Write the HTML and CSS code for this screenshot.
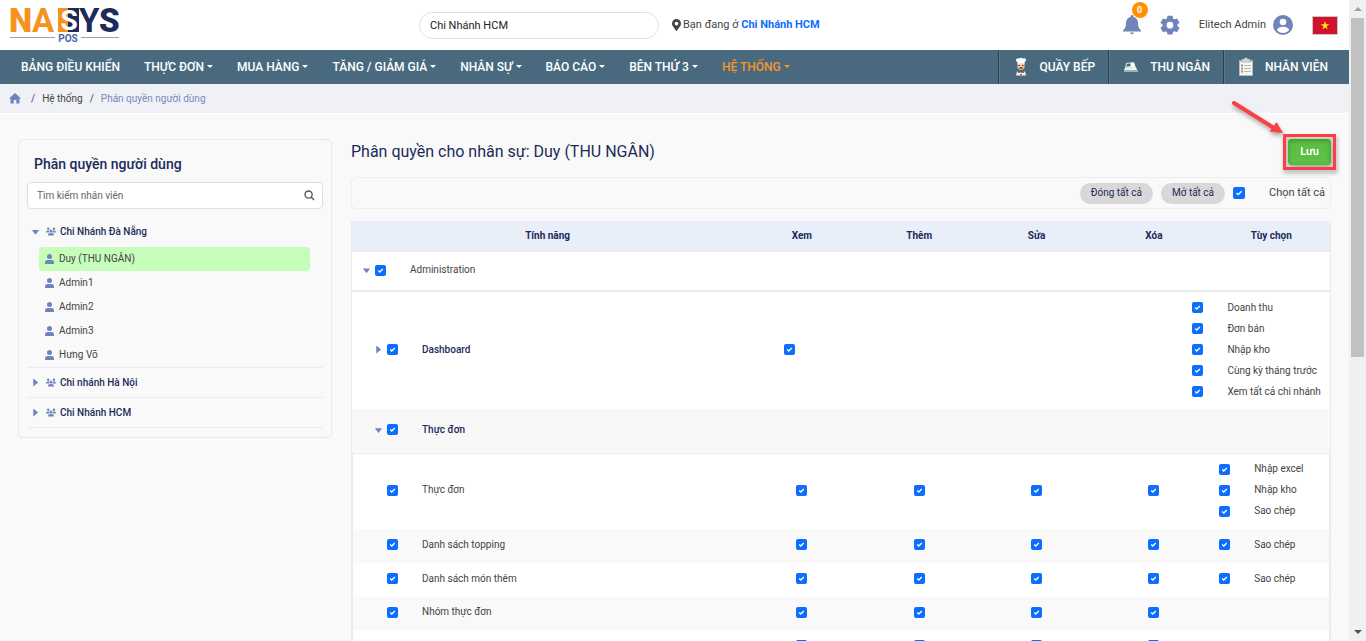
FILE: index.html
```html
<!DOCTYPE html>
<html lang="vi">
<head>
<meta charset="utf-8">
<title>Phân quyền người dùng</title>
<link rel="stylesheet" href="styles.css">
</head>
<body>
<svg class="defs" width="0" height="0" aria-hidden="true">
  <symbol id="user" viewBox="0 0 9 10"><circle cx="4.5" cy="2.6" r="2.5"/><path d="M0 10V8.5C0 6.8 1.3 6 2.6 6h3.8C7.700 6 9 6.800 9 8.500V10z"/></symbol>
  <symbol id="users" viewBox="0 0 640 512"><path d="M144 0a80 80 0 1 1 0 160A80 80 0 1 1 144 0zM512 0a80 80 0 1 1 0 160A80 80 0 1 1 512 0zM0 298.700C0 239.800 47.800 192 106.700 192h42.700c15.900 0 31 3.500 44.600 9.700-1.300 7.200-1.900 14.700-1.900 22.300 0 38.200 16.800 72.500 43.300 96H21.300C9.600 320 0 310.400 0 298.700zM405.300 320h-.7c26.600-23.500 43.300-57.800 43.300-96 0-7.600-.7-15-1.900-22.300 13.600-6.300 28.700-9.700 44.600-9.700h42.700C592.200 192 640 239.800 640 298.700c0 11.800-9.600 21.300-21.300 21.300zM224 224a96 96 0 1 1 192 0 96 96 0 1 1-192 0zM128 485.300C128 411.700 187.700 352 261.300 352h117.400C452.300 352 512 411.700 512 485.300c0 14.700-11.900 26.700-26.700 26.700H154.700c-14.700 0-26.700-11.900-26.700-26.700z"/></symbol>
</svg>
<div class="shell">
<div class="app">
  <header class="topbar">
    <a class="logo" href="#" aria-label="NASYS POS">
      <svg width="112" height="42" viewBox="0 0 112 42">
        <rect x="49" y="5" width="10" height="24" fill="#f6921e"/><rect x="59" y="5" width="11" height="24" fill="#1c2b59"/>
        <g font-family="Roboto, sans-serif" font-weight="900" font-size="33">
          <text x="0" y="29" fill="#f6921e">N</text><text x="23" y="29" fill="#f6921e" font-weight="700">A</text>
          <text x="60" y="27" fill="#fff" font-size="28" font-weight="700" text-anchor="middle">S</text>
          <text x="70" y="29" fill="#1c2b59" font-weight="700">Y</text><text x="90" y="29" fill="#1c2b59">S</text>
        </g>
        <path d="M1 34.500h45M72 34.500h38" stroke="#9aa0b5"/>
        <text x="59" y="39" text-anchor="middle" font-family="Roboto, sans-serif" font-weight="700" font-size="10" fill="#4a66a5">POS</text>
      </svg>
    </a>
    <div class="branch">
      <input class="branch-input" type="text" value="Chi Nhánh HCM" aria-label="Chi nhánh">
      <p class="here"><svg width="9" height="12" viewBox="0 0 384 512" fill="#444"><path fill-rule="evenodd" d="M172 502C27 291 0 270 0 192 0 86 86 0 192 0s192 86 192 192c0 78-27 99-172 310-10 13-30 13-40 0zM192 272a80 80 0 1 0 0-160 80 80 0 0 0 0 160z"/></svg>
      <span>Bạn đang ở <a href="#">Chi Nhánh HCM</a></span></p>
    </div>
    <div class="tools">
      <button class="icon-btn bell" aria-label="Thông báo"><svg width="18" height="20" viewBox="0 0 18 20" fill="#6f84bb"><path d="M9 0c.9 0 1.500.6 1.500 1.400v.5C13.500 2.600 15 5 15 8c0 4 1 5.500 3 7.500V16.500H0V15.500C2 13.500 3 12 3 8c0-3 1.500-5.400 4.500-6.100v-.5C7.500.6 8.100 0 9 0zM6.500 17.500h5L9 19.500z"/></svg><span class="count">0</span></button>
      <button class="icon-btn" aria-label="Cài đặt"><svg width="20" height="20" viewBox="0 0 24 24" fill="#6f84bb"><path fill-rule="evenodd" d="M9 1h6l.7 3.300 1.500.9 3.300-1.100 3 5.200-2.600 2.200v1.700l2.600 2.200-3 5.200-3.300-1.100-1.500.9L15 23.500H9l-.7-3.100-1.500-.9-3.300 1.100-3-5.200 2.600-2.200v-1.700L.5 9.300l3-5.200 3.300 1.100 1.500-.9zM12 8.200a4 4 0 1 0 0 8 4 4 0 0 0 0-8z"/></svg></button>
      <a class="account" href="#">Elitech Admin <svg width="20" height="20" viewBox="0 0 20 20"><circle cx="10" cy="10" r="10" fill="#6f84bb"/><circle cx="10" cy="7" r="3.300" fill="#fff"/><path d="M3.800 15c1-2.500 3.200-3.200 6.200-3.200s5.200.7 6.200 3.200c-1.500 2-3.700 3-6.200 3s-4.700-1-6.200-3z" fill="#fff"/></svg></a>
      <button class="icon-btn" aria-label="Tiếng Việt"><svg width="26" height="19" viewBox="0 0 26 19"><path fill="#d0122b" stroke="#c5c8cc" d="M.5.5h25v18H.5z"/><path fill="#ffde17" d="M13 5l1.100 3.200h3.300l-2.700 2 1 3.200L13 11.500l-2.700 1.900 1-3.200-2.700-2h3.300z"/></svg></button>
    </div>
  </header>
  <nav class="nav">
    <ul class="menu">
      <li><a href="#">BẢNG ĐIỀU KHIỂN</a></li>
      <li><a class="drop" href="#">THỰC ĐƠN</a></li>
      <li><a class="drop" href="#">MUA HÀNG</a></li>
      <li><a class="drop" href="#">TĂNG / GIẢM GIÁ</a></li>
      <li><a class="drop" href="#">NHÂN SỰ</a></li>
      <li><a class="drop" href="#">BÁO CÁO</a></li>
      <li><a class="drop" href="#">BÊN THỨ 3</a></li>
      <li><a class="drop active" href="#">HỆ THỐNG</a></li>
    </ul>
    <ul class="stations">
      <li><a href="#"><svg width="18" height="20" viewBox="0 0 18 20"><path fill="#eccba5" d="M5.500 6h7v5q-3.500 4-7 0z"/><path fill="#fff" d="M5.500 6.500L5 4.500Q3 3.500 4.500 2q1-1 2.500-.5Q9 0 11 1.500q2-.5 2.700.5.800 2-.7 2.500l-.5 2z"/><path fill="#5b3b32" d="M6.500 8H8v1H6.500zM10 8h1.500v1H10zM6.500 11L9 10l2.500 1L9 12z"/><path fill="#f4f1ee" d="M4 18.500l1-4 4 1 4-1 1 4z"/><path fill="#b84138" d="M6 14l3 1.500L12 14v2l-3-.5L6 16zm2 3h2v1H8z"/></svg>QUẦY BẾP</a></li>
      <li><a href="#"><svg width="18" height="20" viewBox="0 0 18 20"><path fill="#d4dddd" d="M4 6l8-1 2 6H3z"/><path fill="#2f7167" d="M5 7l3-.5.500 2.500-4 .5z"/><path fill="#fff" d="M9 6h3l1 4H9z"/><path fill="#eef1f1" d="M3 11l11-1 1 3H2z"/><path fill="#a6b0b5" d="M2 13h14v2H2z"/></svg>THU NGÂN</a></li>
      <li><a href="#"><svg width="18" height="20" viewBox="0 0 18 20"><rect x="2" y="3" width="14" height="16" rx="1" fill="#b8bdbd"/><path fill="#f5f5f2" d="M3 5h12v13H3z"/><path fill="#d4d6d3" stroke="#8c9696" stroke-width=".5" d="M5 2h2q2-3 4 0h2v3H5z"/><path stroke="#b5bbbb" d="M7 8.500h7M7 11.500h7M7 14.500h7"/><path fill="#c97f79" d="M4 7.500h2v2H4zm0 6h2v2H4z"/><path fill="#7ba98a" d="M4 10.500h2v2H4z"/></svg>NHÂN VIÊN</a></li>
    </ul>
  </nav>
  <nav class="crumbs" aria-label="Đường dẫn">
    <a href="#" aria-label="Trang chủ"><svg width="12" height="11" viewBox="0 0 12 11" fill="#6f84bb"><path d="M6 0l6 5.500H10.500V10.500H7.300V7H4.700v3.500H1.500V5.500H0z"/></svg></a>
    <span class="sep">/</span><a href="#">Hệ thống</a><span class="sep">/</span><span class="here-crumb">Phân quyền người dùng</span>
  </nav>
  <main class="main">
    <aside class="panel">
      <h2>Phân quyền người dùng</h2>
      <div class="search">
        <input type="search" placeholder="Tìm kiếm nhân viên" aria-label="Tìm kiếm nhân viên">
        <svg width="11" height="11" viewBox="0 0 12 12" fill="none" stroke="#555" stroke-width="1.500"><circle cx="5" cy="5" r="3.900"/><path d="M8 8l3 3"/></svg>
      </div>
      <ul class="tree">
        <li class="group">
          <button class="branch-name"><i class="tri down"></i><svg width="10" height="9"><use href="#users"/></svg>Chi Nhánh Đà Nẵng</button>
          <ul class="people">
            <li><a class="picked" href="#"><svg width="9" height="10"><use href="#user"/></svg>Duy (THU NGÂN)</a></li>
            <li><a href="#"><svg width="9" height="10"><use href="#user"/></svg>Admin1</a></li>
            <li><a href="#"><svg width="9" height="10"><use href="#user"/></svg>Admin2</a></li>
            <li><a href="#"><svg width="9" height="10"><use href="#user"/></svg>Admin3</a></li>
            <li><a href="#"><svg width="9" height="10"><use href="#user"/></svg>Hưng Võ</a></li>
          </ul>
        </li>
        <li class="group"><button class="branch-name"><i class="tri right"></i><svg width="10" height="9"><use href="#users"/></svg>Chi nhánh Hà Nội</button></li>
        <li class="group"><button class="branch-name"><i class="tri right"></i><svg width="10" height="9"><use href="#users"/></svg>Chi Nhánh HCM</button></li>
      </ul>
    </aside>
    <section class="content">
      <div class="title-row">
        <h1>Phân quyền cho nhân sự: Duy (THU NGÂN)</h1>
        <div class="save-wrap">
          <button class="save">Lưu</button>
          <svg class="arrow" width="64" height="50" viewBox="0 0 64 50"><path d="M7 8l40 25" stroke="#f94144" stroke-width="4" stroke-linecap="round"/><path d="M56 38L42.500 36.500 49.500 27z" fill="#f94144"/></svg>
        </div>
      </div>
      <div class="toolbar">
        <button class="pill">Đóng tất cả</button>
        <button class="pill">Mở tất cả</button>
        <label class="all"><input class="check big" type="checkbox" checked>Chọn tất cả</label>
      </div>
      <div class="grid">
        <table class="cols head">
          <colgroup><col class="c-name"><col><col><col><col><col></colgroup>
          <thead><tr><th>Tính năng</th><th>Xem</th><th>Thêm</th><th>Sửa</th><th>Xóa</th><th>Tùy chọn</th></tr></thead>
          <tbody><tr class="admin"><td colspan="6"><div class="feature"><i class="tri down"></i><label><input class="check" type="checkbox" checked>Administration</label></div></td></tr></tbody>
        </table>
        <table class="cols modules">
          <colgroup><col class="m-name"><col class="m-col"><col class="m-col"><col class="m-col"><col class="m-col"><col></colgroup>
          <tbody>
          <tr><td><div class="feature strong"><i class="tri right"></i><label><input class="check" type="checkbox" checked>Dashboard</label></div></td>
            <td class="mid"><input class="check" type="checkbox" checked aria-label="Dashboard: Xem"></td><td></td><td></td><td></td>
            <td><div class="options">
              <label><input class="check" type="checkbox" checked>Doanh thu</label>
              <label><input class="check" type="checkbox" checked>Đơn bán</label>
              <label><input class="check" type="checkbox" checked>Nhập kho</label>
              <label><input class="check" type="checkbox" checked>Cùng kỳ tháng trước</label>
              <label><input class="check" type="checkbox" checked>Xem tất cả chi nhánh</label>
            </div></td></tr>
          <tr class="parent"><td colspan="6"><div class="feature strong"><i class="tri down"></i><label><input class="check" type="checkbox" checked>Thực đơn</label></div></td></tr>
          </tbody>
        </table>
        <table class="cols items">
          <colgroup><col class="c-name"><col><col><col><col><col></colgroup>
          <tbody>
          <tr><td><div class="feature"><label><input class="check" type="checkbox" checked>Thực đơn</label></div></td>
            <td class="mid"><input class="check" type="checkbox" checked aria-label="Thực đơn: Xem"></td><td class="mid"><input class="check" type="checkbox" checked aria-label="Thực đơn: Thêm"></td><td class="mid"><input class="check" type="checkbox" checked aria-label="Thực đơn: Sửa"></td><td class="mid"><input class="check" type="checkbox" checked aria-label="Thực đơn: Xóa"></td>
            <td><div class="options">
              <label><input class="check" type="checkbox" checked>Nhập excel</label>
              <label><input class="check" type="checkbox" checked>Nhập kho</label>
              <label><input class="check" type="checkbox" checked>Sao chép</label>
            </div></td></tr>
          <tr><td><div class="feature"><label><input class="check" type="checkbox" checked>Danh sách topping</label></div></td>
            <td class="mid"><input class="check" type="checkbox" checked aria-label="Topping: Xem"></td><td class="mid"><input class="check" type="checkbox" checked aria-label="Topping: Thêm"></td><td class="mid"><input class="check" type="checkbox" checked aria-label="Topping: Sửa"></td><td class="mid"><input class="check" type="checkbox" checked aria-label="Topping: Xóa"></td>
            <td><div class="options"><label><input class="check" type="checkbox" checked>Sao chép</label></div></td></tr>
          <tr><td><div class="feature"><label><input class="check" type="checkbox" checked>Danh sách món thêm</label></div></td>
            <td class="mid"><input class="check" type="checkbox" checked aria-label="Món thêm: Xem"></td><td class="mid"><input class="check" type="checkbox" checked aria-label="Món thêm: Thêm"></td><td class="mid"><input class="check" type="checkbox" checked aria-label="Món thêm: Sửa"></td><td class="mid"><input class="check" type="checkbox" checked aria-label="Món thêm: Xóa"></td>
            <td><div class="options"><label><input class="check" type="checkbox" checked>Sao chép</label></div></td></tr>
          <tr class="short"><td><div class="feature"><label><input class="check" type="checkbox" checked>Nhóm thực đơn</label></div></td>
            <td class="mid"><input class="check" type="checkbox" checked aria-label="Nhóm: Xem"></td><td class="mid"><input class="check" type="checkbox" checked aria-label="Nhóm: Thêm"></td><td class="mid"><input class="check" type="checkbox" checked aria-label="Nhóm: Sửa"></td><td class="mid"><input class="check" type="checkbox" checked aria-label="Nhóm: Xóa"></td><td></td></tr>
          <tr class="short"><td></td>
            <td class="mid"><input class="check" type="checkbox" checked aria-label="Xem"></td><td class="mid"><input class="check" type="checkbox" checked aria-label="Thêm"></td><td class="mid"><input class="check" type="checkbox" checked aria-label="Sửa"></td><td class="mid"><input class="check" type="checkbox" checked aria-label="Xóa"></td><td></td></tr>
          </tbody>
        </table>
      </div>
    </section>
  </main>
</div>
<div class="scrollbar" aria-hidden="true"><i class="sb-up"></i><div class="sb-track"><div class="sb-thumb"></div></div><i class="sb-down"></i></div>
</div>
</body>
</html>
```
FILE: styles.css
```css
* { box-sizing: border-box; }
body { margin: 0; font-family: Roboto, "Noto Sans", sans-serif; font-size: 11px; line-height: 16px; color: #444; background: #f9f9f9; }
h1, h2, p, ul { margin: 0; padding: 0; }
ul { list-style: none; }
a { color: inherit; text-decoration: none; }
button, input { font: inherit; color: inherit; }
button { border: 0; background: none; padding: 0; }
svg { display: block; flex: none; }
.defs { position: absolute; }
.shell { display: flex; height: 100vh; }
.app { flex: 1; min-width: 0; overflow: hidden; }

.topbar { display: flex; align-items: center; height: 50px; padding: 0 11px 0 9px; background: #fff; }
.logo { width: 410px; }
.logo svg { overflow: visible; margin-bottom: 2px; }
.branch { display: flex; align-items: center; gap: 13px; flex: 1; }
.branch-input { width: 240px; height: 27px; border: 1px solid #dcdfe4; border-radius: 14px; padding: 0 10px; background: #fff; color: #222; }
.here { display: flex; align-items: center; gap: 2px; }
.here a { color: #0d6efd; font-weight: 700; }
.tools { display: flex; align-items: center; gap: 19px; }
.icon-btn { position: relative; }
.count { position: absolute; left: 9px; top: -13px; width: 16px; height: 16px; border-radius: 8px; background: #ff9100; color: #fff; font-size: 9px; font-weight: 700; text-align: center; }
.account { display: flex; align-items: center; gap: 7px; }

.nav { display: flex; justify-content: space-between; height: 34px; padding: 0 0 0 21px; background: #496a7e; color: #fff; font-size: 12px; font-weight: 500; }
.menu { display: flex; align-items: center; gap: 24px; }
.drop::after { content: ""; display: inline-block; margin-left: 3px; vertical-align: 3px; border: 3px solid transparent; border-top-color: currentColor; border-bottom: 0; }
.active { color: #f7942b; }
.stations { display: flex; }
.stations li { display: flex; align-items: center; padding: 0 13px; border-left: 1px solid #2c404c; box-shadow: inset 1px 0 #59798c; }
.stations li:last-child { padding-right: 21px; }
.stations a { display: flex; align-items: center; gap: 10px; }

.crumbs { display: flex; align-items: center; gap: 7px; height: 30px; padding: 0 9px; background: #f0f1f6; border-bottom: 1px solid #fff; font-size: 10px; }
.crumbs a:first-child { margin-right: 3px; }
.here-crumb { color: #7a89b8; }

.main { display: flex; align-items: flex-start; gap: 19px; padding: 25px 18px; }
.panel { width: 314px; flex: none; border: 1px solid #e9e9ec; border-radius: 5px; padding: 14px 8px 9px; }
.panel h2 { padding-left: 7px; font-size: 14px; line-height: 20px; font-weight: 500; color: #1c2b59; }
.search { display: flex; align-items: center; height: 27px; margin: 8px 0 12px; padding: 0 7px 0 9px; border: 1px solid #dcdfe9; border-radius: 4px; background: #fff; }
.search input { flex: 1; min-width: 0; border: 0; outline: 0; padding: 0; background: none; font-size: 10px; }
.search input::placeholder { color: #666; }
.tree { font-size: 10px; }
.group { border-bottom: 1px solid #ebebed; }
.branch-name { display: flex; align-items: center; gap: 4px; width: 100%; height: 29px; padding-left: 4px; color: #1c2b59; font-weight: 500; }
.branch-name svg { margin-left: 2px; }
.tree svg { fill: #6f84bb; }
.people { padding: 0 13px 0 12px; }
.group:first-child .branch-name { height: 21px; margin-bottom: 5px; }
.people a { display: flex; align-items: center; gap: 5px; height: 24px; padding-left: 6px; border-radius: 4px; }
.people .picked { background: #c6fdbb; }
.tri { width: 9px; height: 8px; flex: none; background: #6f84bb; }
.tri.down { clip-path: polygon(10% 30%, 90% 30%, 50% 90%); }
.tri.right { clip-path: polygon(25% 0, 80% 50%, 25% 100%); }

.content { flex: 1; min-width: 0; }
.title-row { display: flex; justify-content: space-between; align-items: center; height: 26px; margin-bottom: 12px; }
.title-row h1 { font-size: 16px; line-height: 28px; font-weight: 400; color: #1c2b59; }
.save-wrap { position: relative; outline: 3px solid #f94144; outline-offset: 2px; filter: drop-shadow(1px 3px 2px #0005); }
.save { display: block; width: 43px; height: 26px; border-radius: 4px; background: #5bc043; box-shadow: inset 0 2px 4px #2b6d2088; color: #fff; font-weight: 700; }
.arrow { position: absolute; right: 40px; bottom: 20px; }
.toolbar { display: flex; align-items: center; justify-content: flex-end; gap: 8px; height: 32px; margin-bottom: 12px; padding-right: 5px; border: 1px solid #eee; border-radius: 5px; }
.pill { height: 21px; padding: 0 11px; border-radius: 11px; background: #d8d8d8; color: #1c2b59; font-size: 10px; }
.all { display: flex; align-items: center; gap: 24px; }

.grid { border: 1px solid #ebebeb; border-top: 0; font-size: 10px; color: #444; }
.cols { width: 100%; table-layout: fixed; border-collapse: collapse; }
.c-name { width: 40%; }
.m-name { width: 39%; }
.m-col { width: 113px; }
.cols th { height: 30px; padding: 0; background: #e9eff9; color: #1c2b59; font-weight: 700; }
.cols td { padding: 0 0 2px; }
.head { border-bottom: 2px solid #ebebeb; }
.head thead { border-bottom: 2px solid #ebebeb; }
.admin { height: 40px; background: #fff; }
.modules tr { height: 117px; background: #fff; }
.modules .parent { height: 44px; background: #f8f8f8; border-bottom: 1px solid #ebebeb; }
.items { border-left: 1px solid #ebebeb; border-right: 1px solid #ebebeb; }
.items tr { height: 34px; background: #fff; }
.items tr:first-child { height: 75px; }
.items .short { height: 33px; }
.items tr:nth-child(even) { background: #f9f9f9; }
.feature { display: flex; align-items: center; gap: 4px; padding-left: 10px; }
.modules .feature { padding-left: 22px; }
.items .feature { padding-left: 34px; }
.feature label { display: flex; align-items: center; gap: 24px; }
.strong { font-weight: 500; color: #1c2b59; }
.mid { text-align: center; }
.mid .check { vertical-align: middle; }
.options { display: flex; flex-direction: column; gap: 5px; padding-left: 7px; }
.options label { display: flex; align-items: center; gap: 24px; white-space: nowrap; }
.check { appearance: none; flex: none; width: 11px; height: 11px; margin: 0; border-radius: 2px; background: #0d6efd url("data:image/svg+xml,%3Csvg xmlns='http://www.w3.org/2000/svg' viewBox='0 0 11 11'%3E%3Cpath fill='none' stroke='%23fff' stroke-width='1.300' d='M3.200 5.500l1.600 1.500L7.800 4'/%3E%3C/svg%3E") center / contain no-repeat; }
.big { width: 12px; height: 12px; }

.scrollbar { width: 17px; flex: none; display: flex; flex-direction: column; align-items: center; padding: 0 2px; background: #f0f0f0; }
.sb-track { flex: 1; width: 100%; }
.sb-thumb { height: 56%; background: #c1c1c1; }
.sb-up, .sb-down { display: block; margin: 7px 0; border: 4px solid transparent; }
.sb-up { border-top: 0; border-bottom-color: #a0a0a0; }
.sb-down { border-bottom: 0; border-top-color: #505050; }
```
